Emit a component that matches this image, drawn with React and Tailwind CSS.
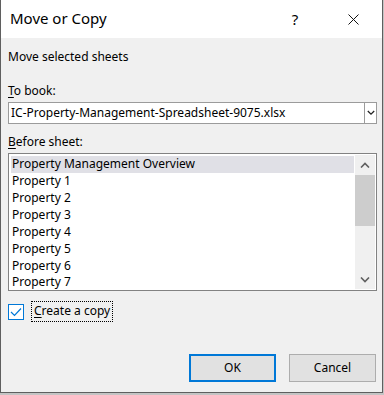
import React, { useState } from "react";

const sheets = [
  "Property Management Overview",
  "Property 1",
  "Property 2",
  "Property 3",
  "Property 4",
  "Property 5",
  "Property 6",
  "Property 7",
];

function Chevron({ up, className }) {
  return (
    <svg width="10" height="6" viewBox="0 0 10 6" className={className}>
      <path
        d={up ? "M1 5.5 L5 1.5 L9 5.5" : "M1 0.5 L5 4.5 L9 0.5"}
        fill="none"
        stroke="currentColor"
        strokeWidth="1.6"
      />
    </svg>
  );
}

export default function App() {
  const [copy, setCopy] = useState(true);
  const [selected, setSelected] = useState(0);

  return (
    <div
      className="w-[384px] h-[395px] bg-[#c4c4c4] text-[12px] text-black"
      style={{ fontFamily: '"Segoe UI", "Noto Sans", sans-serif' }}
    >
      <div className="w-[383px] h-[393px] border-l border-r border-b border-[#5f5f5f] bg-[#f0f0f0] flex flex-col">
        {/* title bar */}
        <div className="h-[38px] bg-white flex items-center shrink-0">
          <div className="pl-[9px] text-[15px] leading-none flex-1 pb-[1px]">Move or Copy</div>
          <div className="w-[58px] text-[15px] leading-none text-center">?</div>
          <div className="w-[58px] flex justify-center">
            <svg width="11" height="11" viewBox="0 0 11 11">
              <path d="M0.5 0.5 L10.5 10.5 M10.5 0.5 L0.5 10.5" stroke="#111" strokeWidth="1" />
            </svg>
          </div>
        </div>

        <div className="pl-[7px] pr-[5px] flex flex-col">
          <div className="mt-[11px] leading-[16px]">Move selected sheets</div>

          <div className="mt-[18px] leading-[16px]">
            <span className="underline underline-offset-2">T</span>o book:
          </div>
          <div className="mt-[3px] h-[22px] border border-[#9b9b9b] bg-white flex">
            <div className="flex-1 pl-[2px] leading-[20px]">IC-Property-Management-Spreadsheet-9075.xlsx</div>
            <div className="w-[12px] border-l border-[#9b9b9b] flex items-center justify-center text-[#222]">
              <Chevron className="w-[8px]" />
            </div>
          </div>

          <div className="mt-[10px] leading-[16px]">
            <span className="underline underline-offset-2">B</span>efore sheet:
          </div>
          <div className="mt-[3px] h-[138px] border border-[#828282] bg-white flex p-[1px] overflow-hidden">
            <div className="flex-1 pl-[1px] pt-[1px] flex flex-col overflow-hidden">
              {sheets.map((s, i) => (
                <div
                  key={s}
                  onClick={() => setSelected(i)}
                  className={
                    (i === sheets.length - 1 ? "h-[14px] leading-[14px] " : "h-[17px] leading-[15px] ") +
                    "shrink-0 pl-[1px] " +
                    (i === selected ? "bg-[#e0e0e6]" : "")
                  }
                >
                  {s}
                </div>
              ))}
            </div>
            <div className="w-[20px] ml-[1px] bg-[#f0f0f0] flex flex-col">
              <div className="h-[20px] flex items-center justify-center text-[#606060]">
                <Chevron up />
              </div>
              <div className="h-[51px] bg-[#cdcdcd]" />
              <div className="flex-1" />
              <div className="h-[18px] flex items-center justify-center text-[#606060]">
                <Chevron />
              </div>
            </div>
          </div>

          <div className="mt-[10px] flex items-center h-[21px]">
            <button
              onClick={() => setCopy(!copy)}
              className="w-[16px] h-[16px] border border-[#0078d7] bg-white flex items-center justify-center"
            >
              {copy && (
                <svg width="12" height="10" viewBox="0 0 12 10">
                  <path d="M1 5 L4.5 8.5 L11 1.5" fill="none" stroke="#0078d7" strokeWidth="1.2" />
                </svg>
              )}
            </button>
            <div className="ml-[7px] h-[21px] px-[2px] border border-dotted border-black leading-[18px]">
              <span className="underline underline-offset-2">C</span>reate a copy
            </div>
          </div>

          <div className="mt-[32px] flex justify-end gap-[13px] pr-[1px]">
            <button className="w-[87px] h-[28px] border-2 border-[#0078d7] bg-[#e1e1e1]">OK</button>
            <button className="w-[87px] h-[28px] border border-[#adadad] bg-[#e1e1e1]">Cancel</button>
          </div>
        </div>
      </div>
    </div>
  );
}
